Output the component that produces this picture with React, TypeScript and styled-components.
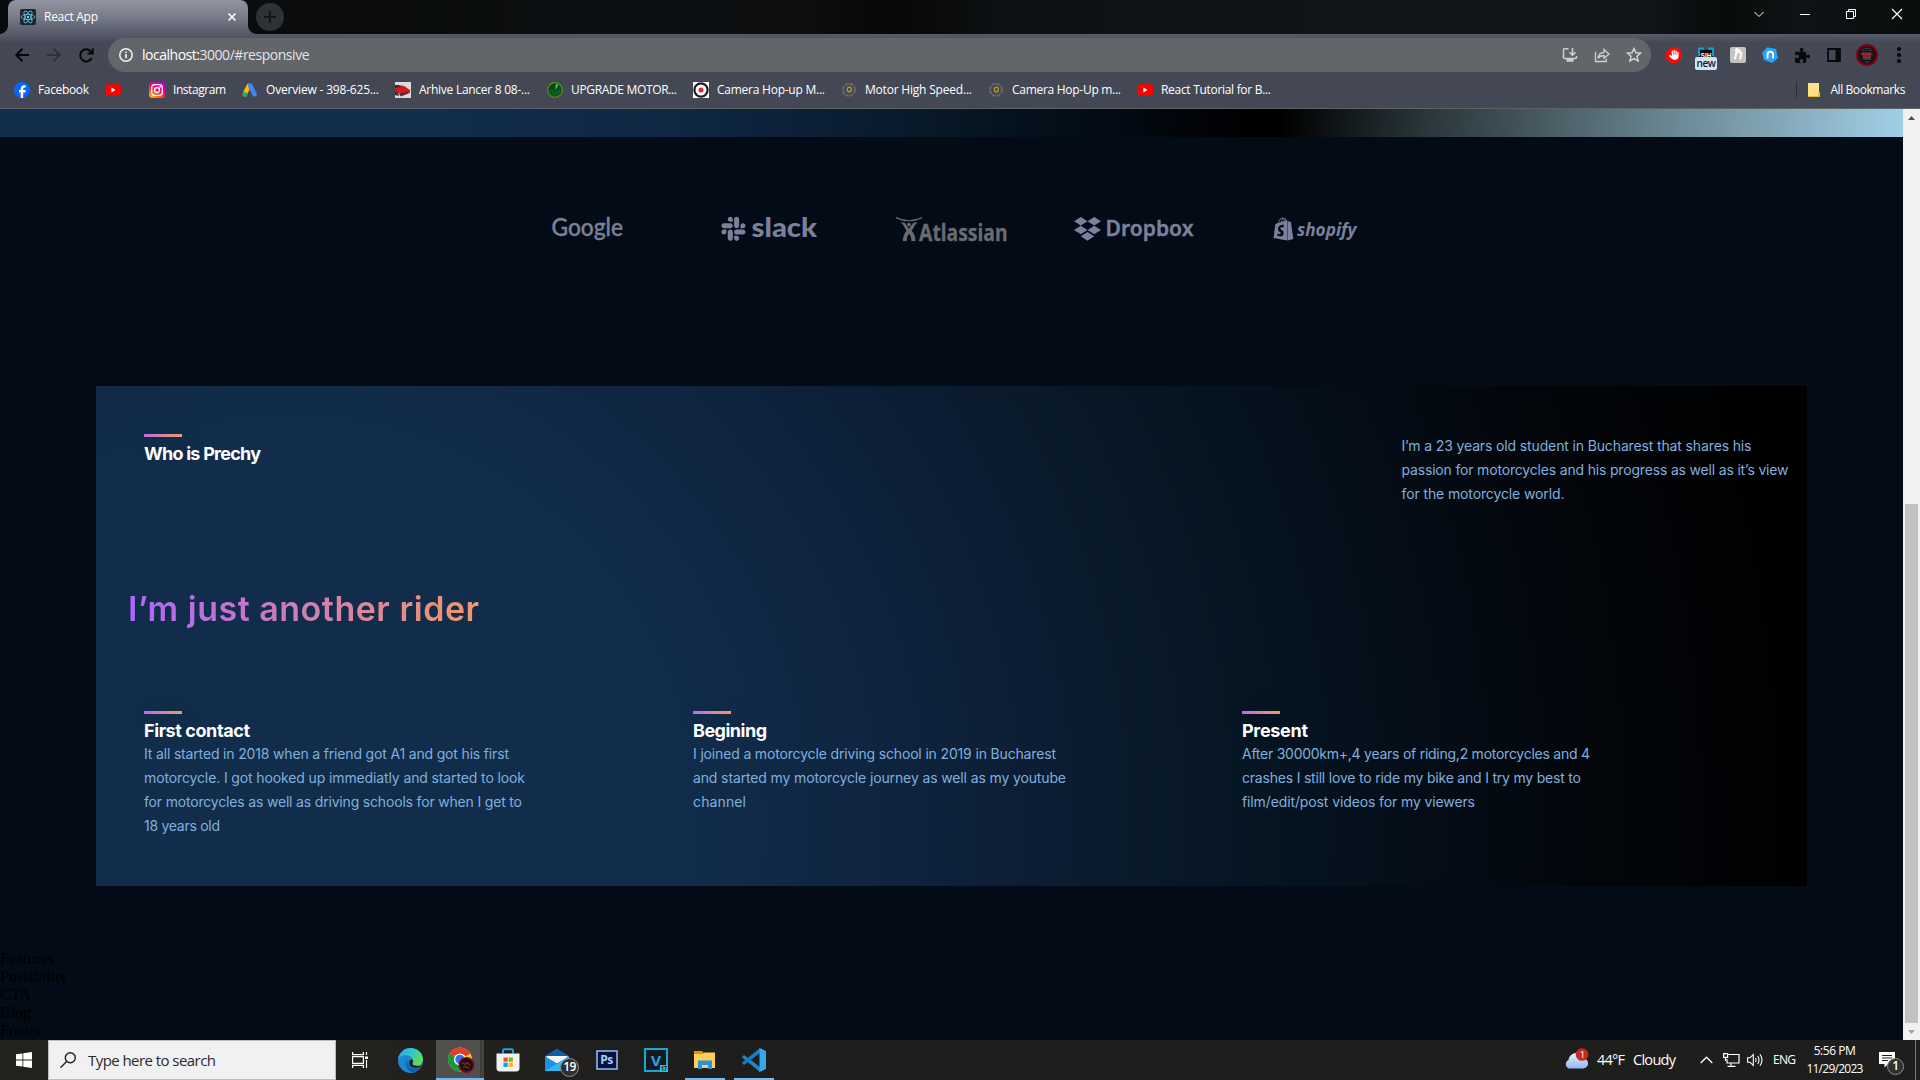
import React, { useLayoutEffect, useRef, useState } from "react";
import styled, { createGlobalStyle, css } from "styled-components";
import { FaSlack, FaShopify, FaHand, FaPuzzlePiece } from "react-icons/fa6";

const ui = '"Open Sans", "Noto Sans", sans-serif';
const copy = 'Inter, "Open Sans", sans-serif';

const GlobalStyle = createGlobalStyle`
  * { box-sizing: border-box; margin: 0; padding: 0; }
  body { margin: 0; background: #030b16; overflow: hidden; }
  svg { display: block; flex: none; overflow: visible; }
`;

/* Text that tracks its letters so that it fills a given width */
const Tracked = styled.span`
  display: inline-block;
  white-space: pre;
`;
function Fit({ w, children }: { w: number; children: string }) {
  const ref = useRef<HTMLSpanElement>(null);
  const [spacing, setSpacing] = useState(0);
  useLayoutEffect(() => {
    if (ref.current) {
      const natural = ref.current.getBoundingClientRect().width;
      setSpacing((w - natural) / (children.length - 1));
    }
  }, [w, children]);
  return <Tracked ref={ref} style={{ letterSpacing: spacing }}>{children}</Tracked>;
}

const Screen = styled.div`
  width: 1920px;
  height: 1080px;
  display: flex;
  flex-direction: column;
  overflow: hidden;
  font-family: ${ui};
`;

/* ---------- browser chrome ---------- */
const TabStrip = styled.div`
  height: 34px;
  display: flex;
  padding-left: 8px;
  background: linear-gradient(90deg, #08090b 0, #0a0c0e 250px, #090b0c 380px, #0d1012 620px, #0c0e10 800px, #060708 890px, #0e1113 1010px, #101416 1300px, #111517 1650px, #080a0b 1725px, #101315 1800px, #0a0c0d 1920px);
`;
const Tab = styled.div`
  position: relative;
  width: 240px;
  height: 34px;
  display: flex;
  align-items: center;
  padding: 0 12px;
  border-radius: 8px 8px 0 0;
  color: #fff;
  font-size: 12px;
  background: linear-gradient(#9497a2, #7b7e8b 45%, #555969);
  &::before, &::after {
    content: "";
    position: absolute;
    bottom: 0;
    width: 8px;
    height: 8px;
  }
  &::before { left: -8px; background: radial-gradient(circle at 0 0, transparent 7.5px, #585c6b 8px); }
  &::after { right: -8px; background: radial-gradient(circle at 100% 0, transparent 7.5px, #585c6b 8px); }
`;
const Favicon = styled.div`
  width: 16px;
  height: 16px;
  border-radius: 2px;
  background: #20232a;
  margin-right: 8px;
`;
const TabTitle = styled.div`flex: 1; height: 18px; line-height: 18px;`;
const NewTab = styled.div`
  width: 28px;
  height: 28px;
  margin: 3px 0 0 8px;
  border-radius: 50%;
  background: #2f3234;
  display: grid;
  place-items: center;
`;
const WindowButtons = styled.div`
  margin-left: auto;
  height: 28px;
  display: flex;
  align-items: center;
`;
const WindowButton = styled.div`
  width: 46px;
  display: grid;
  place-items: center;
`;
const Toolbar = styled.div`
  height: 38px;
  display: flex;
  align-items: center;
  padding: 4px 0 0 15px;
  background: linear-gradient(#585c6b, #454956 9px, #444854);
`;
const NavIcon = styled.div`
  width: 32px;
  height: 16px;
  display: flex;
  align-items: center;
`;
const Omnibox = styled.div`
  width: 1543px;
  height: 34px;
  margin-left: -3px;
  border-radius: 17px;
  background: #626569;
  display: flex;
  align-items: center;
  padding: 0 9px 0 11px;
`;
const Url = styled.div`
  flex: 1;
  margin-left: 9px;
  font-size: 14px;
  line-height: 20px;
  color: #e3e4e6;
  b { font-weight: 400; color: #fff; }
`;
const OmniIcons = styled.div`display: flex; gap: 16px;`;
const Extensions = styled.div`
  display: flex;
  align-items: center;
  padding-left: 15px;
  gap: 16px;
`;
const ExtSlot = styled.div<{ $bg?: string; $r?: number }>`
  width: 16px;
  height: 16px;
  display: grid;
  place-items: center;
  color: #fff;
  font: 700 14px/16px "Liberation Serif", serif;
  background: ${(p) => p.$bg || "transparent"};
  border-radius: ${(p) => p.$r || 0}px;
`;
const Helper = styled(ExtSlot)`
  position: relative;
`;
const NewBadge = styled.div`
  position: absolute;
  left: -3px;
  top: 10px;
  width: 22px;
  height: 13px;
  border-radius: 2px;
  background: #d3e3fd;
  color: #15171b;
  font: 600 10px/13px ${ui};
  text-align: center;
  letter-spacing: -0.4px;
`;
const Avatar = styled.div`
  width: 22px;
  height: 22px;
  margin: 0 -3px 0 -2px;
  border-radius: 50%;
`;
const Dots = styled.div`
  width: 16px;
  display: grid;
  justify-items: center;
  gap: 2.5px;
  i { width: 3.4px; height: 3.4px; border-radius: 50%; background: #08090b; }
`;
const Bookmarks = styled.div`
  height: 37px;
  display: flex;
  align-items: center;
  padding: 0 15px 0 14px;
  background: #444854;
  border-bottom: 1px solid #5f6262;
  color: #fff;
  font-size: 12px;
`;
const Bookmark = styled.div<{ $w: number }>`
  width: ${(p) => p.$w}px;
  display: flex;
  align-items: center;
  gap: 8px;
  line-height: 18px;
  white-space: nowrap;
`;
const AllBookmarks = styled.div`
  margin-left: auto;
  display: flex;
  align-items: center;
  border-left: 1px solid #2b2e37;
  height: 16px;
  padding-left: 11px;
  gap: 9px;
  line-height: 18px;
`;

/* ---------- page ---------- */
const Viewport = styled.div`
  height: 931px;
  display: flex;
`;
const Page = styled.main`
  width: 1903px;
  background: #030b16;
`;
const HeroEnd = styled.div`
  height: 28px;
  background: linear-gradient(93deg, #112d4b 0, #112d4b 430px, #0f2743 680px, #0a1d31 860px, #051420 990px, #030a13 1120px, #010306 1210px, #000 1255px, #000 1280px, #2c3a3f 1435px, #415157 1515px, #678490 1660px, #84a8b9 1780px, #a0cfe6 1900px);
`;
const Brands = styled.div`
  height: 249px;
  display: flex;
  align-items: flex-start;
  padding: 79px 0 0 552px;
  color: #7b819c;
`;
const Brand = styled.div<{ $w: number; $gap: number }>`
  width: ${(p) => p.$w}px;
  height: 28px;
  margin-right: ${(p) => p.$gap}px;
  display: flex;
`;
const About = styled.section`
  width: 1711px;
  height: 500px;
  margin-left: 96px;
  padding: 48px 0 0 48px;
  background: radial-gradient(circle at 190px 440px, #112d4b 0, #112d4b 390px, #0f2541 570px, #0b1d33 760px, #081826 900px, #051320 1020px, #040b14 1180px, #020509 1340px, #000 1530px);
`;
const Intro = styled.div`
  display: flex;
  height: 144px;
`;
const Heading = styled.div`
  width: 1257.5px;
`;
const Bar = styled.div`
  width: 38px;
  height: 3px;
  margin-bottom: 4px;
  box-shadow: 3px 3px 25px rgba(0, 0, 0, 0.25);
  background: linear-gradient(103.22deg, #ae67fa -13.86%, #f49867 99.55%);
`;
const FeatureTitle = styled.h1`
  height: 24px;
  font: 700 18px/26px ${copy};
  color: #fff;
`;
const Copy = styled.p`
  font: 400 14px/24px ${copy};
  color: #81afdd;
  & > span { display: block; }
`;
const Slogan = styled.h1`
  width: 352px;
  height: 45px;
  margin: 8px 0 0 -16px;
  font: 600 34px/46px ${copy};
  background: linear-gradient(89.97deg, #ae67fa 1.84%, #f49867 102.67%);
  background-clip: text;
  -webkit-background-clip: text;
  color: transparent;
`;
const Features = styled.div`
  display: grid;
  grid-template-columns: 549px 549px 1fr;
  margin-top: 80px;
`;
const FooterLinks = styled.div`
  margin-top: 64px;
  font: 16px/18px "Liberation Serif", serif;
  color: #000;
`;
const Scrollbar = styled.div`
  width: 17px;
  background: #f1f1f1;
  display: flex;
  flex-direction: column;
  align-items: center;
  justify-content: space-between;
`;
const ScrollThumb = styled.div`
  width: 13px;
  height: 519px;
  margin-top: auto;
  background: #c1c1c1;
`;
const Arrow = styled.div`height: 17px; display: grid; place-items: center;`;

/* ---------- taskbar ---------- */
const Taskbar = styled.div`
  height: 40px;
  display: flex;
  background: linear-gradient(90deg, #24221d, #22211e 400px, #1e1e1d 760px, #1e1e1e);
  color: #fff;
`;
const Start = styled.div`
  width: 48px;
  display: grid;
  place-items: center;
`;
const Search = styled.div`
  width: 288px;
  border: 1px solid #bcbcbc;
  background: #f1f1f1;
  display: flex;
  align-items: center;
  padding-left: 11px;
  gap: 12px;
  font-size: 15px;
  line-height: 20px;
  color: #2b2b2b;
`;
const TaskButton = styled.div<{ $on?: boolean; $open?: boolean; $w: number }>`
  position: relative;
  width: ${(p) => p.$w}px;
  display: grid;
  place-items: center;
  background: ${(p) => (p.$on ? "linear-gradient(90deg, #51504e 44px, #2f2f2e 44px, #454442 45px)" : "transparent")};
  ${(p) => (p.$on || p.$open) && css`
    &::after {
      content: "";
      position: absolute;
      bottom: 0;
      left: ${p.$on ? 0 : 5}px;
      right: ${p.$on ? 0 : 4}px;
      height: 2px;
      background: #76b9ed;
    }
  `}
`;
const CountBadge = styled.div<{ $x: number; $y: number; $s: number }>`
  position: absolute;
  left: ${(p) => p.$x}px;
  top: ${(p) => p.$y}px;
  width: ${(p) => p.$s}px;
  height: ${(p) => p.$s}px;
  border: 1px solid #8d8d8d;
  border-radius: 50%;
  background: #303030;
  font: 600 12px/${(p) => p.$s - 3}px ${ui};
  text-align: center;
  letter-spacing: -0.5px;
`;
const Tray = styled.div`
  margin-left: auto;
  width: 356px;
  display: flex;
  align-items: center;
  font-size: 15px;
  line-height: 20px;
`;
const TrayItem = styled.div<{ $w: number; $size?: number }>`
  width: ${(p) => p.$w}px;
  font-size: ${(p) => p.$size || 14.5}px;
  display: flex;
  align-items: center;
  position: relative;
`;
const Clock = styled.div`
  width: 57px;
  margin: -1px 16px 0 0;
  display: grid;
  justify-items: center;
  font-size: 12px;
  line-height: 18px;
`;
const ShowDesktop = styled.div`width: 5px; height: 40px; border-left: 1px solid #77777a; margin-left: auto;`;

/* ---------- drawings ---------- */
const ReactLogo = () => (
  <svg width="16" height="16" viewBox="-12 -12 24 24" fill="none" stroke="#61dafb" strokeWidth="1.1">
    <circle r="1.8" fill="#61dafb" stroke="none" />
    <ellipse rx="10" ry="4" />
    <ellipse rx="10" ry="4" transform="rotate(60)" />
    <ellipse rx="10" ry="4" transform="rotate(120)" />
  </svg>
);
const YouTube = () => (
  <svg width="16" height="16" viewBox="0 0 16 16"><rect x="0" y="2.3" width="16" height="11.4" rx="3" fill="#f00" /><path d="M6.4 5.6v4.8L10.5 8z" fill="#fff" /></svg>
);
const Facebook = () => (
  <svg width="16" height="16" viewBox="0 0 16 16"><circle cx="8" cy="8" r="8" fill="#0866ff" /><path d="M6.7 16V10.4H5V8h1.7V6.9c0-2.5 1.2-3.7 3.6-3.7.5 0 1.2.1 1.5.2v2.1h-1c-1.2 0-1.6.5-1.6 1.6V8h2.5l-.4 2.4H9.2V16z" fill="#fff" /></svg>
);
const Instagram = () => (
  <svg width="16" height="16" viewBox="0 0 16 16">
    <defs><linearGradient id="ig" x1="0" y1="1" x2=".6" y2="0"><stop offset="0" stopColor="#ffd600" /><stop offset=".35" stopColor="#ff5a1f" /><stop offset=".65" stopColor="#ff0169" /><stop offset="1" stopColor="#b900d8" /></linearGradient></defs>
    <rect width="16" height="16" rx="3.5" fill="url(#ig)" />
    <g fill="none" stroke="#fff" strokeWidth="1.3"><rect x="2.7" y="2.7" width="10.6" height="10.6" rx="3" /><circle cx="8" cy="8" r="2.5" /></g><circle cx="11.1" cy="4.9" r=".8" fill="#fff" />
  </svg>
);
const GoogleAds = () => (
  <svg width="16" height="16" viewBox="0 0 16 16" strokeLinecap="round" strokeWidth="4.6"><path d="M6.8 4L3 11.5" stroke="#fbbc04" /><path d="M8.2 3.6l4.3 8.6" stroke="#4285f4" /><circle cx="3" cy="12.5" r="2.5" fill="#34a853" /></svg>
);
const Car = () => (
  <svg width="16" height="16" viewBox="0 0 16 16"><rect width="16" height="16" fill="#ded9da" /><path d="M0 4l4-1 5 1 6 4v3l-7 2-8-3z" fill="#cf1a20" /><path d="M0 3h3l3 2-6 1zM0 9l3 2 1 3-4-1z" fill="#49262a" /><path d="M4 12l9-2v1.5l-7 3z" fill="#40333a" /></svg>
);
const Radar = () => (
  <svg width="16" height="16" viewBox="0 0 16 16"><circle cx="8" cy="8" r="7.3" fill="#06491a" stroke="#6b8b1e" strokeWidth="1.2" /><path d="M8 8l1-6 2.5 1z" fill="#3ddc3d" /><path d="M3 8a5 5 0 0 0 10 0M5 8a3 3 0 0 0 6 0" stroke="#168a31" fill="none" strokeWidth=".8" /></svg>
);
const Target = () => (
  <svg width="16" height="16" viewBox="0 0 16 16"><rect width="16" height="16" fill="#fff" /><circle cx="8" cy="8" r="6.6" fill="#fff" stroke="#1c1c1e" strokeWidth="2.2" /><circle cx="8" cy="8" r="2.5" fill="#ea2230" /></svg>
);
const Gear = () => (
  <svg width="16" height="16" viewBox="0 0 16 16" fill="none"><circle cx="8" cy="7.8" r="6" stroke="#6d6960" strokeWidth="2" strokeDasharray="3.6 1.1" /><ellipse cx="8.3" cy="7.6" rx="2" ry="2.4" stroke="#c09a17" strokeWidth="1.3" /></svg>
);
const Atlassian = () => (
  <svg width="112" height="28" viewBox="0 0 112 28" fill="#696b70">
    <path d="M0 1.600C8 5.600 18 5.600 26 1.600" fill="none" stroke="#696b70" strokeWidth="1.3" />
    <path d="M4 6.500c3.400 1 4.200 4.800 6.500 8.200-2.500 3-3.500 6-3.700 10.300h4c0-3 .6-5.500 2.200-7.300 1.600 2 2.500 4.300 2.500 7.300h4c-.2-4.300-1.300-7.400-3.800-10.300 2.300-3.400 3.400-7.100 6.500-8.200h-4.700c-1.500 1.700-2.500 4-4.600 6.300C10.900 10.500 9.800 8 8.500 6.500z" />
    <circle cx="13" cy="8.700" r="1.9" />
    <text x="23" y="24.800" textLength="88.500" lengthAdjust="spacingAndGlyphs" fontFamily="Noto Sans" fontWeight="700" fontSize="23.500" stroke="#696b70" strokeWidth=".3">Atlassian</text>
  </svg>
);
const Windows = () => (
  <svg width="16" height="16" viewBox="0 0 16 16" fill="#fff"><path d="M0 2.300l6.500-.9v6.200H0zM7.300 1.300L16 0v7.600H7.300zM0 8.400h6.500v6.200L0 13.700zM7.300 8.400H16V16l-8.700-1.300z" /></svg>
);
const Edge = () => (
  <svg width="25" height="25" viewBox="0 0 24 24">
    <defs>
      <linearGradient id="e1" x1="0" y1="0" x2="1" y2=".5"><stop offset="0" stopColor="#2ca7e8" /><stop offset=".5" stopColor="#30c4d4" /><stop offset="1" stopColor="#62dc52" /></linearGradient>
      <linearGradient id="e2" x1="0" y1="0" x2="0" y2="1"><stop offset="0" stopColor="#1b7cc9" /><stop offset="1" stopColor="#0e5aa8" /></linearGradient>
    </defs>
    <circle cx="12" cy="12" r="12" fill="#1a86d4" />
    <path d="M.2 10.800C1 4.600 6 0 12 0c7 0 12 5 12 11 0 4-3.200 6-6.500 6-2.800 0-4.300-1-3.600-2.200.9-1.200.9-2.300.6-3.300C13.700 8.700 10.700 7 7.700 7 4 7 1 8.700.2 10.800z" fill="url(#e1)" />
    <path d="M9.700 9.800c-3.900 2.700-3.600 10.400 3.300 13.200 2.500.5 6.700-1 9-5.200-3 1.500-6.300 1.500-8.700.1-3.200-1.700-4.600-5-3.600-8.100z" fill="url(#e2)" />
    <path d="M11.500 11.500c-1.300 1.500-1 4.800 1.800 6.400 2.400 1.400 5.700 1.400 8.700-.1l.6-.9c-1.500.5-3 .6-5 .1-2.800 0-4.300-1-3.600-2.200.9-1.200.4-2.800-.5-3.700z" fill="#1e1e1d" />
  </svg>
);
const Chrome = () => (
  <svg width="27" height="26" viewBox="0 0 27 26">
    <circle cx="13" cy="12.500" r="12" fill="#fbc116" />
    <path d="M13 12.500L2.600 6.500A12 12 0 0 1 23.400 6.500z" fill="#e33b2e" />
    <path d="M13 12.500L2.600 6.500A12 12 0 0 0 13 24.500L18 15z" fill="#229342" />
    <circle cx="13" cy="12.500" r="6" fill="#fff" /><circle cx="13" cy="12.500" r="4.700" fill="#2e75ea" />
    <circle cx="19.500" cy="18" r="7.300" fill="#141213" stroke="#86091f" strokeWidth="1.6" />
    <path d="M15 15.500l3 2 2-2 3 3M16 20.500l3-1 3 2" stroke="#8b2a30" strokeWidth="1.2" fill="none" />
  </svg>
);
const AvatarDrawing = () => (
  <svg width="22" height="22" viewBox="0 0 22 22">
    <circle cx="11" cy="11" r="10" fill="#1b1416" stroke="#7b0018" strokeWidth="2" />
    <path d="M6.500 5.500Q11 1.500 15.500 5.500L15 15l-4 4.500L7 15z" fill="#3a3a3c" />
    <path d="M6.500 7.500h9M8 5.500h6M8.500 16.500h5" stroke="#09090a" strokeWidth="1.2" />
    <path d="M5 10.500l2-1.500.5 2.500 2-2 1 1.500 2-1.500 1 1.500 1.500-1 1.500.5" stroke="#d01722" strokeWidth="1.1" fill="none" />
    <path d="M7 14l1.500-1.500 1.500 1.500 1.500-1.500 1 1.500 2-1.500" stroke="#d01722" strokeWidth="1" fill="none" />
  </svg>
);
const Store = () => (
  <svg width="24" height="24" viewBox="0 0 24 24"><path d="M7 7V2.500Q7 1.200 8.300 1.200h7.400Q17 1.200 17 2.500V7" fill="none" stroke="#1d9ee0" strokeWidth="2" /><path d="M.5 5.500h23V20a3.500 3.500 0 0 1-3.500 3.500H4A3.500 3.500 0 0 1 .5 20z" fill="#f1f1f2" /><path d="M7 5.500V4M17 5.500V4" stroke="#1d9ee0" strokeWidth="2" /><path d="M7.500 9.500h4.200v4.200H7.500z" fill="#f25022" /><path d="M12.700 9.500h4.200v4.200h-4.200z" fill="#7fba00" /><path d="M7.500 14.700h4.200v4.200H7.500z" fill="#00a4ef" /><path d="M12.700 14.700h4.200v4.200h-4.200z" fill="#ffb900" /></svg>
);
const Mail = () => (
  <svg width="24" height="24" viewBox="0 0 24 24"><path d="M0 8L12 .5 24 8v6H0z" fill="#0f5fa8" /><path d="M1.500 8h21v7h-21z" fill="#f5f5f6" /><path d="M0 8.200l12 7.300 12-7.300V23H0z" fill="#1f90e0" /><path d="M0 23L15 13.700 24 8.200V23z" fill="#35b3f3" /></svg>
);
const Photoshop = () => (
  <svg width="22" height="20" viewBox="0 0 22 20"><rect x="1" y="1" width="20" height="18" fill="#0d1142" stroke="#89b9f0" strokeWidth="1.6" /><text x="4.300" y="14.200" fontFamily="Open Sans" fontWeight="700" fontSize="12" textLength="13" fill="#a3d0ff">Ps</text></svg>
);
const Vegas = () => (
  <svg width="24" height="24" viewBox="0 0 24 24"><rect x="1" y="1" width="22" height="22" fill="#101a20" stroke="#16b9ea" strokeWidth="1.8" /><text x="7" y="17.500" fontFamily="Open Sans" fontWeight="700" fontSize="15" textLength="10" lengthAdjust="spacingAndGlyphs" fill="#28a6e8">V</text><rect x="16" y="17" width="8" height="7" fill="#1ec5ee" /><text x="17" y="23" fontFamily="Open Sans" fontWeight="700" fontSize="6.500" textLength="6" lengthAdjust="spacingAndGlyphs" fill="#101a20">17</text></svg>
);
const Explorer = () => (
  <svg width="22" height="20" viewBox="0 0 22 20"><path d="M0 1h8l2 2h10.500L21 6H0z" fill="#d99a09" /><path d="M0 4h9l1.500-1.500H21V18H0z" fill="#fccf58" /><path d="M4 19v-7.500q0-1 1-1h12q1 0 1 1V19h-4v-4H8v4z" fill="#2e91dc" /></svg>
);
const Code = () => (
  <svg width="24" height="24" viewBox="0 0 24 24"><path d="M.4 8.500L2 7l16 12v5L.4 9.800z" fill="#1f86c8" /><path d="M.4 15.500L2 17 18 5V0L.4 14.200z" fill="#167bbf" /><path d="M17.500 0L24 3v18l-6.500 3z" fill="#35a8ee" /></svg>
);
const Weather = () => (
  <svg width="26" height="24" viewBox="0 0 26 24"><defs><linearGradient id="cl" x1="0" y1="0" x2="0" y2="1"><stop offset="0" stopColor="#eaf2ff" /><stop offset="1" stopColor="#8eb7f2" /></linearGradient></defs><path d="M5 20.500a4.600 4.600 0 0 1-.5-8.500C5 8 8.500 5 12 5c3.500 0 6 2 7 5.500 3 0 5 2 5 5 0 2.800-2.200 5-5.500 5z" fill="url(#cl)" /><circle cx="18" cy="6.500" r="6.300" fill="#c52b1f" /><text x="15.800" y="10" fontFamily="Open Sans" fontSize="9.500" fill="#fff">1</text></svg>
);

const bookmarks: [React.ReactNode, string, number, number][] = [
  [<Facebook />, "Facebook", 51, 91],
  [<YouTube />, "", 0, 44],
  [<Instagram />, "Instagram", 53, 93],
  [<GoogleAds />, "Overview - 398-625...", 113, 153],
  [<Car />, "Arhive Lancer 8 08-...", 111, 152],
  [<Radar />, "UPGRADE MOTOR...", 106, 146],
  [<Target />, "Camera Hop-up M...", 108, 148],
  [<Gear />, "Motor High Speed...", 107, 147],
  [<Gear />, "Camera Hop-Up m...", 109, 149],
  [<YouTube />, "React Tutorial for B...", 110, 140],
];

type Line = [string, number];
const features: { title: Line; lines: Line[] }[] = [
  {
    title: ["First contact", 106],
    lines: [
      ["It all started in 2018 when a friend got A1 and got his first", 365],
      ["motorcycle. I got hooked up immediatly and started to look", 381],
      ["for motorcycles as well as driving schools for when I get to", 378],
      ["18 years old", 76],
    ],
  },
  {
    title: ["Begining", 74],
    lines: [
      ["I joined a motorcycle driving school in 2019 in Bucharest", 363],
      ["and started my motorcycle journey as well as my youtube", 373],
      ["channel", 53],
    ],
  },
  {
    title: ["Present", 66],
    lines: [
      ["After 30000km+,4 years of riding,2 motorcycles and 4", 348],
      ["crashes I still love to ride my bike and I try my best to", 339],
      ["film/edit/post videos for my viewers", 233],
    ],
  },
];
const intro: Line[] = [
  ["I’m a 23 years old student in Bucharest that shares his", 350],
  ["passion for motorcycles and his progress as well as it’s view", 387],
  ["for the motorcycle world.", 163],
];

const Lines = ({ lines }: { lines: Line[] }) => (
  <>{lines.map(([t, w]) => <span key={t}><Fit w={w}>{t}</Fit></span>)}</>
);

export default function App() {
  return (
    <Screen>
      <GlobalStyle />
      <TabStrip>
        <Tab>
          <Favicon><ReactLogo /></Favicon>
          <TabTitle><Fit w={54}>React App</Fit></TabTitle>
          <svg width="8" height="8" viewBox="0 0 8 8" stroke="#fff" strokeWidth="1.6"><path d="M.5.5l7 7M7.500.5l-7 7" /></svg>
        </Tab>
        <NewTab><svg width="12" height="12" viewBox="0 0 12 12" stroke="#12181f" strokeWidth="2"><path d="M6 0v12M0 6h12" /></svg></NewTab>
        <WindowButtons>
          <WindowButton><svg width="10" height="7" viewBox="0 0 11 7" fill="none" stroke="#fff" strokeWidth="1.1"><path d="M.5.7l5 5 5-5" /></svg></WindowButton>
          <WindowButton><svg width="10" height="2"><rect width="10" height="1" y="1" fill="#fff" /></svg></WindowButton>
          <WindowButton><svg width="10" height="10" viewBox="0 0 10 10" fill="none" stroke="#fff"><path d="M.5 2.500h7v7h-7zM2.500 2.500v-2h7v7h-2" /></svg></WindowButton>
          <WindowButton><svg width="10" height="10" viewBox="0 0 10 10" stroke="#fff" strokeWidth="1.2"><path d="M0 0l10 10M10 0L0 10" /></svg></WindowButton>
        </WindowButtons>
      </TabStrip>
      <Toolbar>
        <NavIcon><svg width="14" height="14" viewBox="0 0 14 14" fill="none" stroke="#050608" strokeWidth="2"><path d="M14 7H1.500M7.500.7L1.300 7l6.200 6.300" /></svg></NavIcon>
        <NavIcon><svg width="14" height="14" viewBox="0 0 14 14" fill="none" stroke="#2a2d35" strokeWidth="1.7"><path d="M0 7h12.500M6.500.7L12.700 7l-6.200 6.300" /></svg></NavIcon>
        <NavIcon><svg width="15" height="15" viewBox="0 0 15 15" fill="none" stroke="#050608" strokeWidth="2"><path d="M12.600 10A6 6 0 1 1 11.700 3.400L13 4.800" /><path d="M13.800.5V5.500H8.500" /></svg></NavIcon>
        <Omnibox>
          <svg width="14" height="14" viewBox="0 0 14 14" fill="none" stroke="#f1f1f1" strokeWidth="1.5"><circle cx="7" cy="7" r="6.200" /><path d="M7 6v4.300M7 3.500v1.500" strokeWidth="1.7" /></svg>
          <Url><b><Fit w={58}>localhost:</Fit></b><Fit w={110}>3000/#responsive</Fit></Url>
          <OmniIcons>
            <svg width="16" height="16" viewBox="0 0 16 16" fill="none" stroke="#cfd0d2" strokeWidth="1.5"><path d="M6.500 1.800H2.500q-1 0-1 1V10.500q0 1 1 1h11q1 0 1-1V9" /><path d="M10.500 1v7M7.500 5.300l3 3 3-3" /><path d="M4.500 13.300h7" strokeWidth="3" /></svg>
            <svg width="16" height="16" viewBox="0 0 16 16" fill="none" stroke="#cfd0d2" strokeWidth="1.3"><path d="M1.500 5v9.500h10.800V11.500" /><path d="M4 11.500c.5-4 2.500-6 6-6.200V2.500L15 7l-5 4.300V8.500c-2.500 0-4.500.8-6 3z" /></svg>
            <svg width="16" height="16" viewBox="0 0 16 16" fill="none" stroke="#d2d3d5" strokeWidth="1.5"><path d="M8 1.500l1.900 4.300 4.600.4-3.500 3.100 1.100 4.600L8 11.500l-4.100 2.400L5 9.300 1.500 6.200l4.600-.4z" /></svg>
          </OmniIcons>
        </Omnibox>
        <Extensions>
          <ExtSlot><svg width="16" height="16" viewBox="0 0 16 16"><path d="M4.700 0h6.600L16 4.700v6.600L11.300 16H4.700L0 11.300V4.700z" fill="#f20d0d" /><g transform="translate(3.200 2.800)"><FaHand size={10} color="#fff" /></g></svg></ExtSlot>
          <Helper>
            <svg width="16" height="16" viewBox="0 0 16 16"><path d="M1 3h14v11H1z" fill="#090b10" /><path d="M1 9V1.500h5M15 9V1.500h-5" fill="none" stroke="#18a4cf" strokeWidth="1.8" /><text x="2.500" y="10.500" fontFamily="Liberation Sans" fontWeight="700" fontSize="6.500" textLength="11" fill="#fff">SIH</text></svg>
            <NewBadge>new</NewBadge>
          </Helper>
          <ExtSlot $bg="#c3c3c3" $r={2}>ℏ</ExtSlot>
          <ExtSlot><svg width="16" height="16" viewBox="0 0 16 16"><path d="M5 .3L14 2l2 9-6 5-8-3L0 6z" fill="#27a3fb" /><path d="M5.500 11.500V7.500a2.800 2.800 0 0 1 5.600 0v4" fill="none" stroke="#fff" strokeWidth="2" /></svg></ExtSlot>
          <ExtSlot><FaPuzzlePiece size={15} color="#08090b" /></ExtSlot>
          <ExtSlot><svg width="14" height="14" viewBox="0 0 14 14"><path d="M1 1h12v12H1z" fill="none" stroke="#08090b" strokeWidth="1.8" /><path d="M8.500 1H13v12H8.500z" fill="#08090b" /></svg></ExtSlot>
          <Avatar><AvatarDrawing /></Avatar>
          <Dots><i /><i /><i /></Dots>
        </Extensions>
      </Toolbar>
      <Bookmarks>
        {bookmarks.map(([icon, text, w, slot], i) => (
          <Bookmark key={i} $w={slot}>{icon}{text && <Fit w={w}>{text}</Fit>}</Bookmark>
        ))}
        <AllBookmarks>
          <svg width="13" height="14" viewBox="0 0 13 14"><path d="M0 0h11v9l1 1v4H0z" fill="#ffe187" /><path d="M10 9.500h2v3.500h-2z" fill="#f2bd2c" /><path d="M0 13.500h12" stroke="#e6b93b" /></svg>
          <Fit w={75}>All Bookmarks</Fit>
        </AllBookmarks>
      </Bookmarks>

      <Viewport>
        <Page>
          <HeroEnd />
          <Brands>
            <Brand $w={71} $gap={98}>
              <svg width="71" height="28" fill="currentColor"><text x="-.5" y="20" textLength="71.500" lengthAdjust="spacingAndGlyphs" fontFamily="Lato" fontWeight="500" stroke="currentColor" strokeWidth=".35" fontSize="24">Google</text></svg>
            </Brand>
            <Brand $w={96} $gap={79}>
              <svg width="97" height="28" fill="currentColor"><g transform="translate(-1.300 -.9)"><FaSlack size={27.5} /></g><text x="30.500" y="21" textLength="65.500" lengthAdjust="spacingAndGlyphs" fontFamily="Lato" fontWeight="900" fontSize="26.500">slack</text></svg>
            </Brand>
            <Brand $w={112} $gap={66}><Atlassian /></Brand>
            <Brand $w={120} $gap={79}>
              <svg width="121" height="28" fill="currentColor"><svg x="0" y="1" width="27" height="24" viewBox="0 0 27 24"><path d="M6.750 0l6.750 4.300-6.750 4.300L0 4.300zM20.250 0L27 4.300l-6.750 4.300-6.750-4.300zM6.750 8.700l6.750 4.300-6.750 4.300L0 13zM20.250 8.700L27 13l-6.750 4.300L13.500 13zM13.500 14.900l6.750 4.300L13.500 23.800l-6.750-4.600z" /></svg><text x="31.500" y="20" textLength="88" lengthAdjust="spacingAndGlyphs" fontFamily="Noto Sans" fontWeight="600" stroke="currentColor" strokeWidth=".4" fontSize="21">Dropbox</text></svg>
            </Brand>
            <Brand $w={85} $gap={0}>
              <svg width="90" height="28" fill="currentColor"><svg x="-.5" y="1" width="22" height="24" viewBox="12 30 424 452" preserveAspectRatio="none"><FaShopify size={448} y={32} x={0} /></svg><text x="24" y="20" textLength="59.500" lengthAdjust="spacingAndGlyphs" fontFamily="Noto Sans" fontWeight="700" fontStyle="italic" fontSize="18.500">shopify</text></svg>
            </Brand>
          </Brands>
          <About>
            <Intro>
              <Heading>
                <Bar />
                <FeatureTitle><Fit w={117}>Who is Prechy</Fit></FeatureTitle>
              </Heading>
              <Copy><Lines lines={intro} /></Copy>
            </Intro>
            <Slogan><Fit w={351}>I’m just another rider</Fit></Slogan>
            <Features>
              {features.map((f) => (
                <div key={f.title[0]}>
                  <Bar />
                  <FeatureTitle><Fit w={f.title[1]}>{f.title[0]}</Fit></FeatureTitle>
                  <Copy><Lines lines={f.lines} /></Copy>
                </div>
              ))}
            </Features>
          </About>
          <FooterLinks>
            <div>Features</div>
            <div>Possibility</div>
            <div>CTA</div>
            <div>Blog</div>
            <div>Footer</div>
          </FooterLinks>
        </Page>
        <Scrollbar>
          <Arrow><svg width="7" height="4"><path d="M0 4L3.500 0 7 4z" fill="#505050" /></svg></Arrow>
          <ScrollThumb />
          <Arrow><svg width="7" height="4"><path d="M0 0L3.500 4 7 0z" fill="#a3a3a3" /></svg></Arrow>
        </Scrollbar>
      </Viewport>

      <Taskbar>
        <Start><Windows /></Start>
        <Search>
          <svg width="16" height="17" viewBox="0 0 16 17" fill="none" stroke="#222" strokeWidth="1.4"><circle cx="10.300" cy="5.700" r="5" /><path d="M6.800 9.300L.5 15.800" /></svg>
          <Fit w={128}>Type here to search</Fit>
        </Search>
        <TaskButton $w={48}><svg width="16" height="16" viewBox="0 0 16 16" fill="none" stroke="#fff" strokeWidth="1.2"><path d="M.6 0v2.600h10.800V0M.6 16v-2.600h10.800V16M.6 4.600h10.800v6.800H.6zM14.500 0v3M14.500 8v8" /><path d="M13 4.500h3v2.500h-3z" fill="#fff" stroke="none" /></svg></TaskButton>
        <TaskButton $w={52}><Edge /></TaskButton>
        <TaskButton $w={48} $on><Chrome /></TaskButton>
        <TaskButton $w={48}><Store /></TaskButton>
        <TaskButton $w={50}><Mail /><CountBadge $x={28} $y={18} $s={19}>19</CountBadge></TaskButton>
        <TaskButton $w={49}><Photoshop /></TaskButton>
        <TaskButton $w={49}><Vegas /></TaskButton>
        <TaskButton $w={49} $open><Explorer /></TaskButton>
        <TaskButton $w={49} $open><Code /></TaskButton>
        <Tray>
          <TrayItem $w={33}><Weather /></TrayItem>
          <TrayItem $w={36}><Fit w={28}>44°F</Fit></TrayItem>
          <TrayItem $w={67}><Fit w={43}>Cloudy</Fit></TrayItem>
          <TrayItem $w={23}><svg width="13" height="8" viewBox="0 0 13 8" fill="none" stroke="#fff" strokeWidth="1.3"><path d="M.7 7l5.800-5.800L12.300 7" /></svg></TrayItem>
          <TrayItem $w={24}><svg width="17" height="14" viewBox="0 0 17 14" fill="none" stroke="#fff" strokeWidth="1.2"><path d="M5 1.500h11v8.500H4V6M8 10v3M4.500 13.300h8" /><path d="M.6.6h4v3.800h-4zM2.500 4.500V8" /></svg></TrayItem>
          <TrayItem $w={26}><svg width="17" height="14" viewBox="0 0 17 14" fill="none" stroke="#fff" strokeWidth="1.1"><path d="M.6 4.800h2.400L6.300 1.500v11L3 9.200H.6zM8.500 5q1.300 2 0 4M10.700 3q2.600 4 0 8M13 1.200q4 5.800 0 11.600" /></svg></TrayItem>
          <TrayItem $w={33} $size={12}><Fit w={23}>ENG</Fit></TrayItem>
          <Clock><Fit w={42}>5:56 PM</Fit><Fit w={57}>11/29/2023</Fit></Clock>
          <TrayItem $w={30}><svg width="16" height="16" viewBox="0 0 16 16"><path d="M0 0h16v12H9l-3.500 3.500V12H0z" fill="#fff" /><path d="M3 3.500h10M3 6h10M3 8.500h6" stroke="#1e1e1e" strokeWidth="1.1" /></svg><CountBadge $x={8} $y={6} $s={17}>1</CountBadge></TrayItem>
          <ShowDesktop />
        </Tray>
      </Taskbar>
    </Screen>
  );
}
